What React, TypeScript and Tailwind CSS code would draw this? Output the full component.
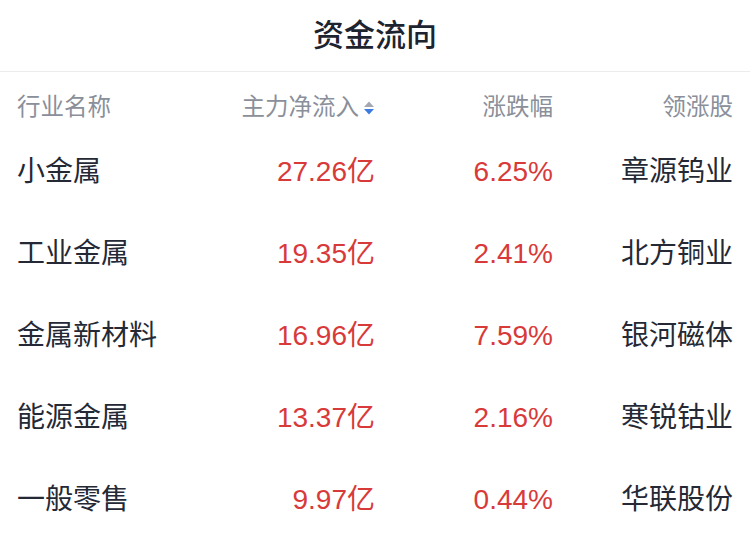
const rows = [
  { name: '小金属', flow: '27.26亿', pct: '6.25%', leader: '章源钨业' },
  { name: '工业金属', flow: '19.35亿', pct: '2.41%', leader: '北方铜业' },
  { name: '金属新材料', flow: '16.96亿', pct: '7.59%', leader: '银河磁体' },
  { name: '能源金属', flow: '13.37亿', pct: '2.16%', leader: '寒锐钴业' },
  { name: '一般零售', flow: '9.97亿', pct: '0.44%', leader: '华联股份' },
];

function SortIcon() {
  return (
    <svg width="12" height="16" viewBox="0 0 12 16" className="ml-[4px] shrink-0">
      <path d="M6 1.5 L11 7 L1 7 Z" fill="#a3a8b2" />
      <path d="M1 9 L11 9 L6 14.5 Z" fill="#3a7be0" />
    </svg>
  );
}

export default function App() {
  return (
    <div
      className="w-[750px] h-[548px] bg-white overflow-hidden"
      style={{ fontFamily: '"Liberation Sans", "Noto Sans CJK SC", sans-serif' }}
    >
      <div className="h-[72px] flex items-center justify-center border-b border-[#ececec]">
        <h1 className="text-[31px] font-medium text-[#1e2330] leading-none">资金流向</h1>
      </div>

      <div className="flex items-center h-[59px] pt-[13px] pl-[17px] text-[23.5px] text-[#8a8f9a] leading-none">
        <div className="w-[180px]">行业名称</div>
        <div className="w-[178px] flex items-center justify-end">
          <span>主力净流入</span>
          <SortIcon />
        </div>
        <div className="w-[178px] text-right">涨跌幅</div>
        <div className="w-[180px] text-right">领涨股</div>
      </div>

      {rows.map((row) => (
        <div key={row.name} className="flex items-center h-[82px] pl-[17px] text-[28px] leading-none">
          <div className="w-[180px] text-[#242935]">{row.name}</div>
          <div className="w-[178px] text-right text-[#d83a3a]">{row.flow}</div>
          <div className="w-[178px] text-right text-[#d83a3a]">{row.pct}</div>
          <div className="w-[180px] text-right text-[#242935]">{row.leader}</div>
        </div>
      ))}
    </div>
  );
}
